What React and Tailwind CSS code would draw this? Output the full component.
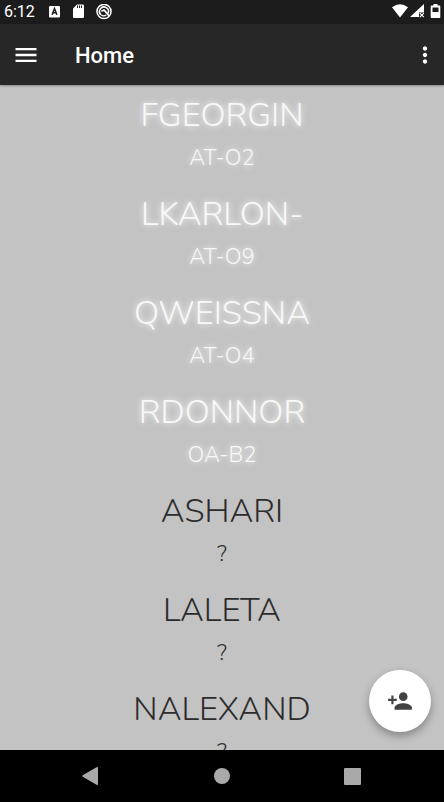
import React from "react";
import { MdMenu, MdMoreVert, MdPersonAdd } from "react-icons/md";

const people = [
  { name: "FGEORGIN", place: "AT-O2", online: true },
  { name: "LKARLON-", place: "AT-O9", online: true },
  { name: "QWEISSNA", place: "AT-O4", online: true },
  { name: "RDONNOR", place: "OA-B2", online: true },
  { name: "ASHARI", place: "?", online: false },
  { name: "LALETA", place: "?", online: false },
  { name: "NALEXAND", place: "?", online: false },
];

function StatusBar() {
  return (
    <div className="flex h-6 shrink-0 items-center bg-[#1c1c1c] pl-1 pr-0.5 text-white">
      <span className="w-11 text-base leading-6">6:12</span>
      <svg className="h-3 w-3" viewBox="0 0 12 12" aria-hidden="true">
        <rect x="1" y="0" width="11" height="11.5" rx="1" fill="#fff" />
        <path d="M4.1 8.700 6.500 2.500l2.400 6.200M5 6.700h3" fill="none" stroke="#1c1c1c" strokeWidth="1.5" />
      </svg>
      <svg className="ml-3 h-4 w-4" viewBox="0 0 16 16" aria-hidden="true">
        <path d="M5 0.500h6a1 1 0 0 1 1 1V13a1 1 0 0 1-1 1H2a1 1 0 0 1-1-1V4.500z" fill="#fff" />
        <path d="M5.500 1.500v2.500M7.500 1.500v2.500M9.500 1.500v2.500" stroke="#1c1c1c" strokeWidth="1" />
      </svg>
      <svg className="ml-2 h-4 w-4" viewBox="1 1 15 15" aria-hidden="true">
        <circle cx="8.500" cy="8" r="6.600" fill="none" stroke="#fff" strokeWidth="1.400" />
        <path d="M5.700 11.200A4.200 4.200 0 1 1 12.300 9.800" fill="none" stroke="#fff" strokeWidth="1.500" />
        <path d="M6 7.800 8.500 6.600l1.600 1.800 3.200 3.800" fill="none" stroke="#fff" strokeWidth="1.600" />
        <path d="M6 11.500q2.500 1.400 4.600-.2" fill="none" stroke="#fff" strokeWidth="1.300" />
      </svg>
      <svg className="ml-auto h-4 w-4" viewBox="0 0 16 16" aria-hidden="true">
        <path d="M8 13.500 0 3.200Q8-2.900 16 3.200z" fill="#fff" />
      </svg>
      <svg className="ml-0.5 h-4 w-4" viewBox="0 0 16 16" aria-hidden="true">
        <path d="M14 0v8.500H9v4.500H0z" fill="#fff" />
        <path d="m9.800 9.200 4 4m0-4-4 4" stroke="#fff" strokeWidth="1.200" />
      </svg>
      <svg className="ml-1 h-4 w-3" viewBox="0 0 12 16" aria-hidden="true">
        <path d="M3.500 0h4v1.400h2a.8.8 0 0 1 .8.8v11a.8.8 0 0 1-.8.8h-8a.8.8 0 0 1-.8-.8v-11a.8.8 0 0 1 .8-.8h2z" fill="#fff" />
        <path d="M2.500 3.500h6v4.500h-6z" fill="#1c1c1c" />
      </svg>
    </div>
  );
}

function Person({ name, place, online }) {
  return (
    <li
      className={
        online
          ? "pb-3.5 text-center text-[#f8f8f8] [text-shadow:0_0_6px_#fff]"
          : "pb-3.5 text-center text-[#2c2c2c]"
      }
    >
      <h2 className="text-[33px] leading-[41px]">{name}</h2>
      <p className="text-[22px] leading-11">{place}</p>
    </li>
  );
}

export default function App() {
  return (
    <div className="flex h-screen flex-col overflow-hidden bg-[#c3c3c3] font-[Roboto,sans-serif]">
      <StatusBar />
      <header className="z-10 flex h-[61px] shrink-0 items-center bg-[#272727] px-3 text-white shadow-[0_1px_2px_#00000050]">
        <button type="button" aria-label="Open menu">
          <MdMenu className="h-7 w-7" />
        </button>
        <h1 className="ml-[35px] pt-0.5 text-[22px] font-medium leading-7">Home</h1>
        <button type="button" aria-label="More options" className="ml-auto -mr-1.5">
          <MdMoreVert className="size-[26px]" />
        </button>
      </header>
      <main className="relative min-h-0 flex-1">
        <ul className="h-full overflow-y-auto pt-2.5 font-[Nunito,Lato,sans-serif] font-light [scrollbar-width:none]">
          {people.map((p) => (
            <Person key={p.name} {...p} />
          ))}
        </ul>
        <button
          type="button"
          aria-label="Add person"
          className="absolute bottom-[18px] right-[13px] flex size-[62px] items-center justify-center rounded-full bg-white text-[#424242] shadow-[0_4px_8px_#00000050]"
        >
          <MdPersonAdd className="size-[26px]" />
        </button>
      </main>
      <nav className="flex h-[52px] shrink-0 items-center justify-around bg-black pl-6 pr-[26px]">
        <button type="button" aria-label="Back">
          <svg className="h-5 w-5" viewBox="0 0 20 20" aria-hidden="true">
            <path d="M17 2v16a1 1 0 0 1-1.500.8L1.700 10.800a1 1 0 0 1 0-1.600L15.500 1.200A1 1 0 0 1 17 2z" fill="#a9a9a9" />
          </svg>
        </button>
        <button type="button" aria-label="Home" className="size-4 rounded-full bg-[#a9a9a9]" />
        <button type="button" aria-label="Recent apps" className="size-[17px] rounded-[1px] bg-[#a9a9a9]" />
      </nav>
    </div>
  );
}
